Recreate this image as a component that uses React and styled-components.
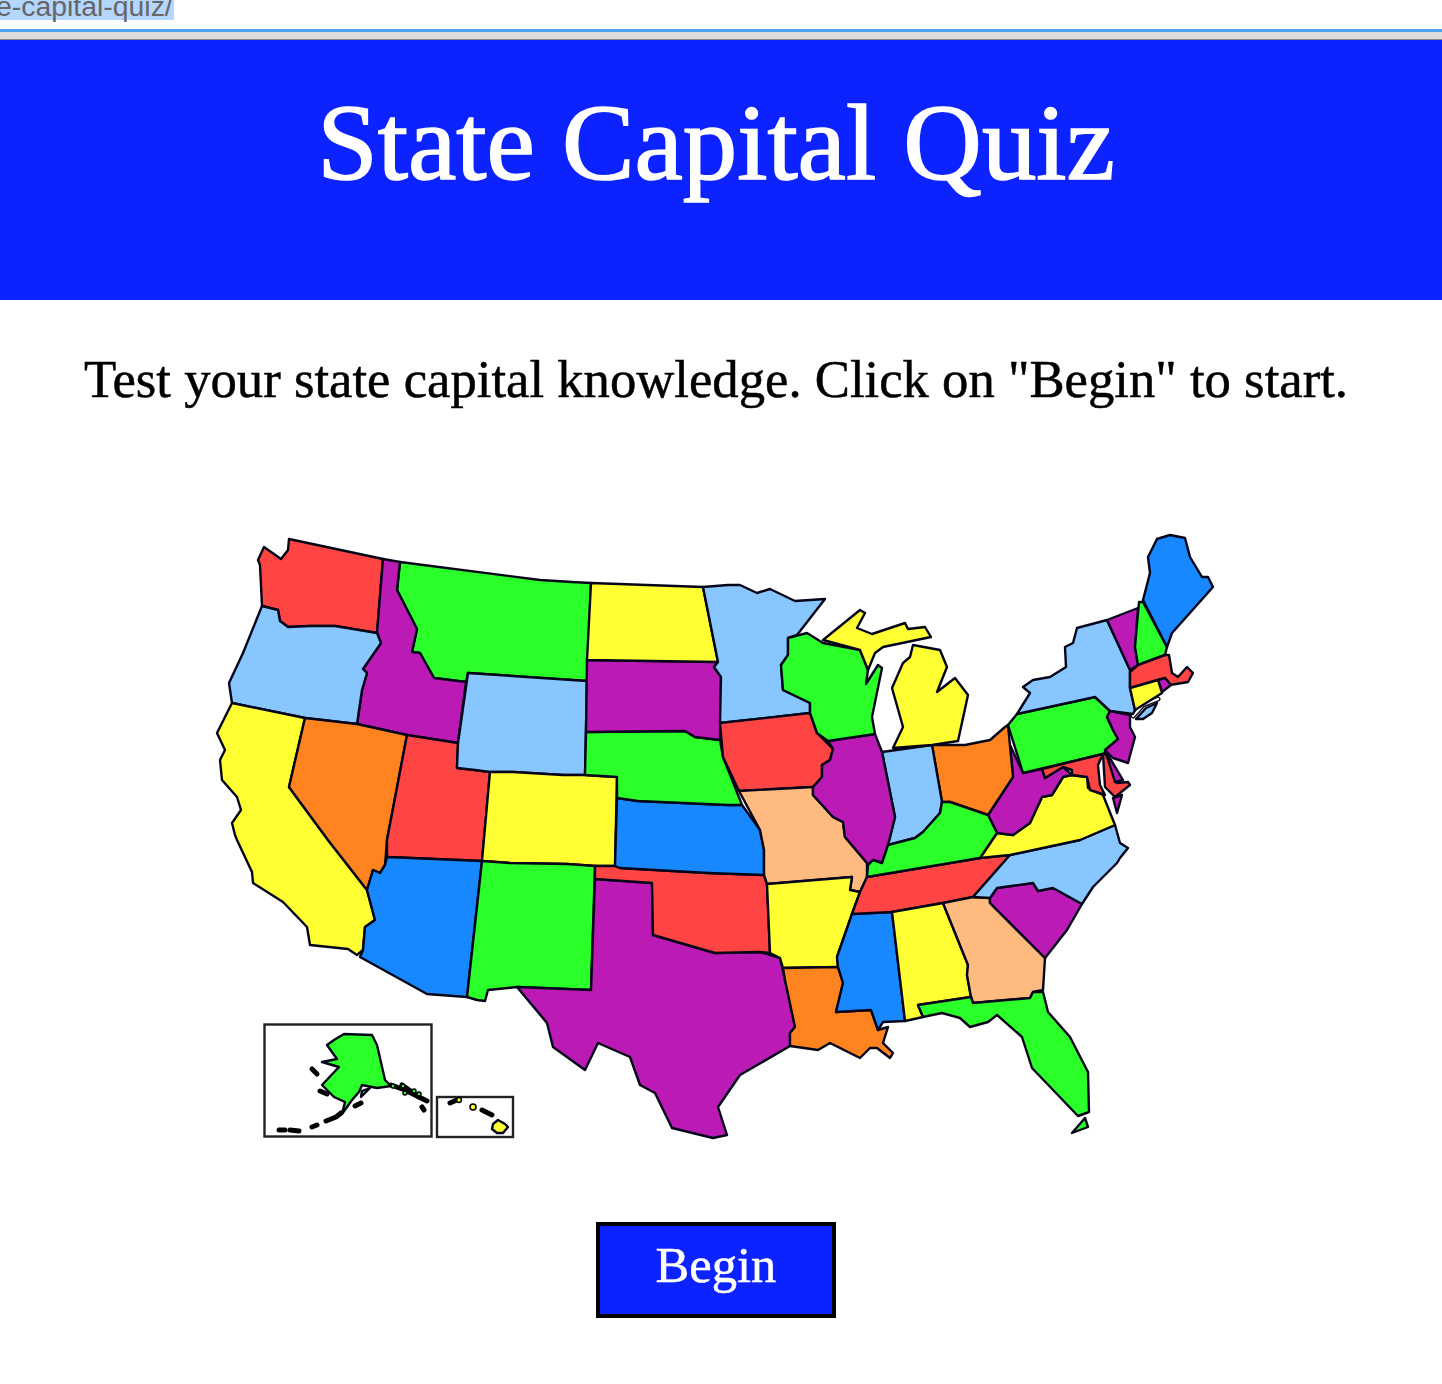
import React from "react"
import styled, { createGlobalStyle } from "styled-components"

const RED = "#ff4444"
const GREEN = "#2aff2a"
const YELLOW = "#ffff33"
const PURPLE = "#bb1ab5"
const SKY = "#88c6ff"
const BLUE = "#1788ff"
const ORANGE = "#ff8420"
const TAN = "#ffbb7f"

// outlines are in page pixels, the svg viewBox starts at the map's corner
const STATES = [
  ["WA", RED, "289,539 383,559 377,633 335,626 310,626 288,627 280,621 278,610 262,606 260,565 258,560 264,547 281,559 288,550"],
  ["MT", GREEN, "400,562 540,580 572,582 591,583 587,681 468,673 466,682 434,678 420,653 412,652 417,629 397,590"],
  ["ID", PURPLE, "383,559 400,562 397,590 417,629 412,652 420,653 434,678 466,682 458,743 407,735 357,724 362,690 367,673 363,669 381,643 377,633"],
  ["OR", SKY, "262,606 278,610 280,621 288,627 310,626 335,626 377,633 381,643 363,669 367,673 362,690 357,724 305,718 232,703 229,683 243,653"],
  ["CA", YELLOW, "232,703 305,718 289,787 328,840 367,890 375,920 365,927 363,950 357,955 348,949 310,945 307,927 283,902 253,883 252,872 237,840 235,835 232,823 241,810 237,797 222,780 220,760 225,750 217,733"],
  ["NV", ORANGE, "305,718 357,724 407,735 387,840 385,865 380,873 373,870 367,890 328,840 289,787"],
  ["UT", RED, "407,735 458,743 457,768 475,770 490,772 482,861 387,857 387,840"],
  ["WY", SKY, "468,673 587,681 585,775 563,775 513,772 490,772 475,770 457,768 458,743"],
  ["CO", YELLOW, "490,772 513,772 563,775 585,775 617,777 615,866 595,866 567,864 510,863 482,861"],
  ["AZ", BLUE, "387,857 482,861 467,997 427,994 360,957 363,950 365,927 375,920 367,890 373,870 380,873 385,865"],
  ["NM", GREEN, "482,861 510,863 567,864 595,866 591,990 517,987 488,990 485,1001 477,1000 467,997"],
  ["TX", PURPLE, "595,879 652,883 653,935 715,953 760,952 780,958 785,980 795,1027 790,1033 790,1046 740,1075 718,1107 727,1135 713,1138 672,1128 655,1093 640,1085 630,1057 598,1043 585,1070 553,1047 547,1023 517,987 591,990"],
  ["OK", RED, "595,866 615,866 620,868 708,873 764,875 767,884 770,953 760,952 715,953 653,935 652,883 595,879"],
  ["KS", BLUE, "617,798 638,801 728,805 742,805 760,830 764,850 764,875 708,873 620,868 615,866"],
  ["NE", GREEN, "586,732 685,731 695,737 720,740 723,757 742,805 728,805 638,801 617,798 617,777 585,775"],
  ["SD", PURPLE, "587,660 718,662 714,667 721,677 720,740 695,737 685,731 586,732"],
  ["ND", YELLOW, "591,583 703,587 718,662 587,660"],
  ["MN", SKY, "703,587 728,585 740,585 757,593 770,589 795,601 825,599 797,635 788,638 788,655 781,665 783,690 810,703 810,713 720,723 721,677 714,667 718,662"],
  ["IA", RED, "720,723 810,713 817,733 833,749 830,760 822,765 822,777 813,787 739,791 723,757"],
  ["MO", TAN, "739,791 813,787 813,795 833,817 843,822 845,837 867,863 867,877 860,892 850,890 852,877 767,884 764,875 764,850 760,830"],
  ["AR", YELLOW, "767,884 852,877 850,890 860,892 852,914 837,957 838,967 783,968 780,958 770,953"],
  ["LA", ORANGE, "783,968 838,967 843,983 836,1012 871,1010 878,1030 888,1027 883,1043 893,1053 890,1058 877,1048 870,1048 860,1058 830,1043 818,1050 790,1046 790,1033 795,1027 785,980"],
  ["MS", BLUE, "852,914 892,912 905,1021 883,1022 878,1030 871,1010 836,1012 843,983 838,967 837,957"],
  ["TN", RED, "867,877 980,858 1010,855 973,897 943,903 892,912 852,914 860,892"],
  ["AL", YELLOW, "892,912 943,903 968,965 967,975 971,997 918,1005 923,1017 905,1021"],
  ["GA", TAN, "943,903 973,897 990,898 990,903 1045,958 1043,990 1033,992 1030,998 973,1003 971,997 967,975 968,965"],
  ["FL", GREEN, "918,1005 971,997 973,1003 1030,998 1033,992 1043,992 1048,1012 1070,1037 1088,1072 1089,1112 1078,1116 1032,1068 1022,1037 997,1015 988,1022 970,1027 960,1018 942,1013 923,1017"],
  ["FK", GREEN, "1072,1133 1085,1118 1088,1127"],
  ["SC", PURPLE, "990,903 990,898 997,888 1033,883 1038,891 1053,888 1082,904 1067,930 1045,958"],
  ["NC", SKY, "973,897 1010,855 1080,840 1115,825 1120,843 1128,848 1120,858 1117,863 1093,887 1082,904 1053,888 1038,891 1033,883 997,888 990,898"],
  ["VA", YELLOW, "980,858 997,833 1013,835 1030,823 1042,797 1052,795 1063,777 1070,775 1087,777 1088,788 1103,795 1115,825 1080,840 1010,855"],
  ["WV", PURPLE, "1010,745 1023,773 1042,769 1045,778 1063,767 1072,775 1063,777 1052,795 1042,797 1030,823 1013,835 997,833 988,815 1013,777"],
  ["OH", ORANGE, "932,745 965,745 990,740 1005,727 1008,725 1013,777 988,815 950,802 942,802"],
  ["IN", SKY, "882,752 932,745 942,802 940,813 923,832 915,838 888,845 895,817"],
  ["IL", PURPLE, "828,741 875,734 882,752 895,817 888,845 882,863 873,860 868,865 867,863 845,837 843,822 833,817 813,795 813,787 822,777 822,765 830,760 833,749"],
  ["WI", GREEN, "788,638 807,633 823,643 860,650 868,670 866,684 878,665 882,668 872,717 875,734 828,741 817,733 810,713 810,703 783,690 781,665 788,655"],
  ["UP", YELLOW, "823,640 860,610 865,613 857,628 872,634 905,623 908,629 925,627 931,637 883,647 875,653 868,670 860,650"],
  ["MI", YELLOW, "913,645 940,650 947,667 937,692 955,678 968,695 958,741 932,745 893,748 903,727 892,688 903,663 910,657"],
  ["KY", GREEN, "942,802 950,802 988,815 997,833 980,858 867,877 868,865 873,860 882,863 888,845 915,838 923,832 940,813"],
  ["PA", GREEN, "1017,714 1095,697 1110,711 1107,717 1113,730 1118,739 1103,754 1023,773 1008,725"],
  ["NY", SKY, "1107,620 1130,670 1130,688 1135,710 1133,714 1110,711 1095,697 1017,714 1030,693 1023,687 1033,680 1050,677 1066,667 1065,647 1073,643 1077,628"],
  ["VT", PURPLE, "1107,620 1138,608 1135,647 1138,665 1130,670"],
  ["NH", GREEN, "1139,602 1143,602 1167,647 1165,655 1138,665 1135,647"],
  ["ME", BLUE, "1143,600 1150,573 1148,557 1157,539 1170,535 1185,538 1190,557 1202,577 1208,577 1213,587 1172,633 1167,647"],
  ["MA", RED, "1130,672 1138,665 1165,655 1169,655 1172,673 1178,677 1187,667 1193,673 1188,682 1182,683 1170,685 1165,678 1130,688"],
  ["RI", PURPLE, "1158,680 1165,678 1171,685 1162,692"],
  ["CT", YELLOW, "1130,688 1158,680 1162,693 1135,710"],
  ["NJ", PURPLE, "1110,711 1130,715 1130,727 1135,737 1128,763 1113,758 1105,750 1118,739 1113,730 1107,717"],
  ["MDW", RED, "1042,769 1103,754 1098,765 1100,785 1105,795 1090,790 1087,777 1072,775 1072,770 1063,767 1045,778"],
  ["MDE", RED, "1103,754 1106,754 1117,783 1128,782 1130,785 1115,797 1105,787"],
  ["DE", PURPLE, "1105,750 1123,780 1115,782"],
  ["VAE", PURPLE, "1113,798 1122,795 1117,813"],
  ["LI", SKY, "1136,719 1146,708 1157,703 1152,713 1143,719"],
  ["AK", GREEN, "344,1034 372,1035 377,1045 385,1080 391,1086 377,1088 362,1085 359,1092 352,1100 342,1114 345,1102 334,1097 322,1085 339,1067 322,1062 337,1059 327,1045 334,1040"],
  ["AK2", GREEN, "362,1091 370,1088 361,1097"],
  ["HI", YELLOW, "493,1124 498,1120 505,1124 508,1127 503,1133 497,1133 492,1129"],
]

// the small islands are nearly solid black in the picture
const ISLANDS = [
  "391,1085 405,1090 427,1101",
  "402,1085 412,1092 419,1097",
  "422,1107 424,1110",
  "341,1113 336,1117 326,1121",
  "317,1125 312,1127",
  "279,1130 285,1130",
  "290,1130 299,1131",
  "312,1069 317,1074",
  "320,1091 327,1094",
  "355,1106 361,1103",
  "450,1103 459,1099",
  "482,1110 492,1115",
]

const ISLAND_DOTS = [
  [GREEN, 403, 1086, 2],
  [GREEN, 405, 1093, 2],
  [GREEN, 414, 1091, 2],
  [GREEN, 419, 1094, 2],
  [GREEN, 393, 1086, 2],
  [YELLOW, 459, 1100, 2.4],
  [YELLOW, 473, 1107, 3],
]

const GlobalStyle = createGlobalStyle`
  html, body {
    margin: 0;
    background: #fff;
  }
`

const Page = styled.div`
  width: 1442px;
  min-height: 1384px;
  overflow: hidden;
  font-family: "Liberation Serif", serif;
`

const AddressClip = styled.div`
  height: 29px;
  overflow: hidden;
`

const SelectedUrl = styled.span`
  display: block;
  width: 178px;
  height: 24px;
  margin: -4px 0 0 -4px;
  background: #b3d7ff;
  color: #666;
  font: 28.4px/20px "Liberation Sans", sans-serif;
`

const Rule = styled.div`
  height: 7px;
  background: #ddd;
  border-top: 3px solid #4aa3f0;
  border-bottom: 1px solid #888;
`

const Banner = styled.header`
  height: 260px;
  padding-right: 10px;
  background: #0c22ff;
`

const Title = styled.h1`
  margin: 0;
  padding-top: 28px;
  color: #fff;
  font-size: 108.8px;
  font-weight: 400;
  line-height: 150px;
  text-align: center;
  -webkit-text-stroke: 1.6px #fff;
`

const Lead = styled.h2`
  margin: 0;
  padding: 44px 10px 0 0;
  color: #000;
  font-size: 52.7px;
  font-weight: 400;
  line-height: 70px;
  text-align: center;
  -webkit-text-stroke: 0.5px #000;
`

const MapBox = styled.div`
  display: flex;
  justify-content: center;
  padding: 116px 10px 0 0;
`

const UsMap = styled.svg`
  display: block;
  width: 1010px;
  height: 620px;
`

const State = styled.polygon`
  fill: ${(p) => p.$color};
  stroke: #05051a;
  stroke-width: 2.4;
  stroke-linejoin: round;
`

const Island = styled.polyline`
  fill: none;
  stroke: #000;
  stroke-width: 5;
  stroke-linecap: round;
  stroke-linejoin: round;
`

const IslandDot = styled.circle`
  fill: ${(p) => p.$color};
  stroke: #000;
  stroke-width: 1.5;
`

// the sound between Long Island and Connecticut, white with a black edge
const Sound = styled.polyline`
  fill: none;
  stroke: ${(p) => (p.$edge ? "#05051a" : "#fff")};
  stroke-width: ${(p) => (p.$edge ? 5 : 2.4)};
  stroke-linecap: round;
`

const Inset = styled.rect`
  fill: #fff;
  stroke: #222;
  stroke-width: 2.4;
`

const ButtonRow = styled.div`
  display: flex;
  justify-content: center;
  padding: 72px 10px 0 0;
`

const BeginButton = styled.button`
  width: 240px;
  height: 96px;
  padding: 0 0 10px;
  background: #0c22ff;
  border: 4px solid #000;
  color: #fff;
  font-family: "Liberation Serif", serif;
  font-size: 50.6px;
  -webkit-text-stroke: 0.5px #fff;
`

export default function App() {
  return (
    <Page>
      <GlobalStyle />
      <AddressClip>
        <SelectedUrl>e-capital-quiz/</SelectedUrl>
      </AddressClip>
      <Rule />
      <Banner>
        <Title>State Capital Quiz</Title>
      </Banner>
      <Lead>Test your state capital knowledge. Click on "Begin" to start.</Lead>
      <MapBox>
        <UsMap viewBox="211 530 1010 620">
          <Inset x="264.5" y="1024.5" width="167" height="112" />
          <Inset x="437" y="1097" width="76" height="40" />
          <Sound $edge points="1133,716 1143,705 1158,699" />
          <Sound points="1133,716 1143,705 1158,699" />
          {STATES.map(([name, color, points]) => (
            <State key={name} $color={color} points={points} />
          ))}
          {ISLANDS.map((points) => (
            <Island key={points} points={points} />
          ))}
          {ISLAND_DOTS.map(([color, x, y, r]) => (
            <IslandDot key={`${x}-${y}`} $color={color} cx={x} cy={y} r={r} />
          ))}
        </UsMap>
      </MapBox>
      <ButtonRow>
        <BeginButton>Begin</BeginButton>
      </ButtonRow>
    </Page>
  )
}
